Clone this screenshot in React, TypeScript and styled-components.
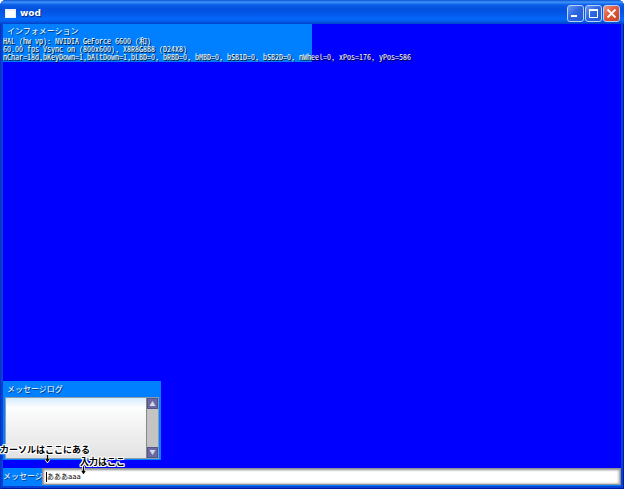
import React from 'react';
import styled, { createGlobalStyle } from 'styled-components';

const GlobalStyle = createGlobalStyle`
  *, *::before { box-sizing: border-box; }
  html, body, #root { height: 100%; margin: 0; }
  body { background: #fff; overflow: hidden; font-family: "Noto Sans CJK JP", sans-serif; }
`;

const Window = styled.main`
  position: relative;
  display: flex;
  flex-direction: column;
  height: 100vh;
  padding: 0 3px 3px;
  border-radius: 6px 6px 0 0;
  background: #0640d4;
  box-shadow: inset 1px 0 #0a32c0, inset -1px -1px #001c9c;
`;

const TitleBar = styled.header`
  display: flex;
  align-items: center;
  height: 24px;
  flex: none;
  margin: 0 -3px;
  padding: 2px 4px 0 5px;
  border-radius: 6px 6px 0 0;
  background: linear-gradient(#0a4fd0 0, #3c94fc 2px, #0a5ce6 5px, #0350de 9px, #0458ea 14px, #0468fc 19px, #0460f0 21px, #0240c8 24px);
`;

const Title = styled.h1`
  flex: 1;
  margin: 0 0 0 4px;
  color: #fff;
  font: bold 9px/16px "DejaVu Sans", sans-serif;
  text-shadow: 1px 1px #0a2a80;
`;

const CaptionButtons = styled.div`
  display: flex;
  gap: 1px;
`;

const CaptionButton = styled.button<{ $close?: boolean }>`
  display: grid;
  place-items: center;
  width: 17px;
  height: 17px;
  padding: 0;
  border: 1px solid #b8d0fa;
  border-radius: 3px;
  background: ${p => p.$close
    ? 'linear-gradient(135deg, #f0957c, #e0583a 45%, #c84420)'
    : 'linear-gradient(135deg, #6c9cf4, #2e66e0 45%, #2058d8)'};
`;

const Client = styled.section`
  display: flex;
  flex: 1;
  flex-direction: column;
  align-items: flex-start;
  min-height: 0;
  background: #0000fe;
`;

const Panel = styled.section`
  background: #0080ff;
  color: #fff;
`;

const InfoPanel = styled(Panel)`
  width: 50%;
  height: 38px;
  padding-top: 1px;
`;

const PanelTitle = styled.h2`
  margin: 0 0 0 4px;
  font-size: 8px;
  font-weight: 400;
  line-height: 12px;
  text-shadow: 1px 1px #023468;
`;

const InfoLine = styled.p`
  margin: 0;
  color: #fff;
  font-family: "Noto Sans Mono CJK JP", "Liberation Mono", "Noto Sans CJK JP", monospace;
  font-size: 8px;
  line-height: 8px;
  white-space: nowrap;
  text-shadow: 1px 1px #000;
`;

const LogPanel = styled(Panel)`
  width: 158px;
  margin-top: auto;
  padding: 2px 2px 1px;
`;

const LogTitle = styled(PanelTitle)`
  margin-left: 2px;
`;

const LogBox = styled.div`
  display: flex;
  height: 62px;
  margin-top: 2px;
  border: 1px solid #8c9cac;
  background: linear-gradient(#d4ecfc, #fcfdfe 9px, #f2f2f2 30px, #e2e2e2);
`;

const LogText = styled.div`
  flex: 1;
`;

const Scrollbar = styled.div`
  display: flex;
  flex-direction: column;
  justify-content: space-between;
  width: 12px;
  border-left: 1px solid #888;
  background: #c4c4c4;
`;

const ScrollButton = styled.button`
  display: grid;
  place-items: center;
  height: 11px;
  padding: 0;
  border: 1px solid #54548c;
  background: #6a6aa4;
`;

const MessageBar = styled.form`
  display: flex;
  align-items: stretch;
  align-self: stretch;
  height: 18px;
  margin-top: 8px;
  background: #0080ff;
`;

const MessageLabel = styled.label`
  width: 39px;
  color: #fff;
  font-size: 8px;
  line-height: 16px;
  white-space: nowrap;
  text-shadow: 1px 1px #023468;
`;

const Field = styled.div`
  display: flex;
  align-items: center;
  flex: 1;
  margin-bottom: 1px;
  padding-left: 3px;
  border: 1px solid #8c9098;
  background: #fff;
  box-shadow: inset 1px 1px 2px #999, inset -1px 0 3px #999;
`;

const Caret = styled.span`
  width: 1px;
  height: 10px;
  background: #000;
`;

const MessageInput = styled.input`
  flex: 1;
  min-width: 0;
  height: 12px;
  padding: 0;
  border: 0;
  outline: 0;
  background: transparent;
  color: #000;
  font: 7px/12px "DejaVu Sans", "Noto Sans CJK JP", sans-serif;
`;

const Note = styled.p<{ $left: number; $bottom: number }>`
  position: absolute;
  left: ${p => p.$left}px;
  bottom: ${p => p.$bottom}px;
  margin: 0;
  color: #000;
  font-size: 9px;
  font-weight: 700;
  line-height: 12px;
  white-space: nowrap;
  text-shadow: 1px 0 #fff, -1px 0 #fff, 0 1px #fff, 0 -1px #fff, 1px 1px #fff, -1px -1px #fff, 1px -1px #fff, -1px 1px #fff;
`;

const Arrow = styled.svg<{ $left: number; $bottom: number }>`
  position: absolute;
  left: ${p => p.$left}px;
  bottom: ${p => p.$bottom}px;
`;

function DownArrow({ left, bottom }: { left: number; bottom: number }) {
  return (
    <Arrow $left={left} $bottom={bottom} width="9" height="10" viewBox="0 0 9 10" aria-hidden="true">
      <path d="M4.5 1V8M3 6L4.5 8L6 6" fill="none" stroke="#fff" strokeWidth="3" />
      <path d="M4.5 1V7M3 6L4.5 8L6 6" fill="none" stroke="#000" strokeWidth="1.4" />
    </Arrow>
  );
}

const infoLines = [
  'HAL (hw vp): NVIDIA GeForce 6600 (和)',
  '60.00 fps Vsync on (800x600), X8R8G8B8 (D24X8)',
  'nChar=18d,bKeyDown=1,bAltDown=1,bLBD=0, bRBD=0, bMBD=0, bSB1D=0, bSB2D=0, nWheel=0, xPos=176, yPos=586',
];

export default function App() {
  return (
    <>
      <GlobalStyle />
      <Window>
        <TitleBar>
          <svg width="11" height="9" aria-hidden="true">
            <rect width="11" height="9" fill="#e8f0fc" />
            <rect x="1" y="2" width="9" height="6" fill="#fff" />
          </svg>
          <Title>wod</Title>
          <CaptionButtons>
            <CaptionButton type="button" aria-label="Minimize">
              <svg width="15" height="15"><path d="M3 10H9" stroke="#fff" strokeWidth="2" /></svg>
            </CaptionButton>
            <CaptionButton type="button" aria-label="Maximize">
              <svg width="15" height="15" fill="none" stroke="#fff"><path d="M3.5 4V11.5H11.5V4" /><path d="M3 4H12" strokeWidth="2" /></svg>
            </CaptionButton>
            <CaptionButton type="button" $close aria-label="Close">
              <svg width="15" height="15"><path d="M3.5 3.5L11.5 11.5M11.5 3.5L3.5 11.5" stroke="#fff" strokeWidth="1.8" /></svg>
            </CaptionButton>
          </CaptionButtons>
        </TitleBar>
        <Client>
          <InfoPanel>
            <PanelTitle>インフォメーション</PanelTitle>
            {infoLines.map(line => <InfoLine key={line}>{line}</InfoLine>)}
          </InfoPanel>
          <LogPanel>
            <LogTitle>メッセージログ</LogTitle>
            <LogBox>
              <LogText role="log" />
              <Scrollbar>
                <ScrollButton type="button" aria-label="Scroll up">
                  <svg width="7" height="7"><path d="M3.5 1L6.5 6H.5Z" fill="#d8d8e8" /></svg>
                </ScrollButton>
                <ScrollButton type="button" aria-label="Scroll down">
                  <svg width="7" height="7"><path d="M3.5 6L6.5 1H.5Z" fill="#d8d8e8" /></svg>
                </ScrollButton>
              </Scrollbar>
            </LogBox>
          </LogPanel>
          <MessageBar>
            <MessageLabel htmlFor="message">メッセージ</MessageLabel>
            <Field>
              <Caret />
              <MessageInput id="message" defaultValue="あああaaa" />
            </Field>
          </MessageBar>
        </Client>
        <DownArrow left={43} bottom={26} />
        <DownArrow left={79} bottom={14} />
        <Note $left={0} $bottom={33}>カーソルはここにある</Note>
        <Note $left={80} $bottom={21}>入力はここ</Note>
      </Window>
    </>
  );
}
